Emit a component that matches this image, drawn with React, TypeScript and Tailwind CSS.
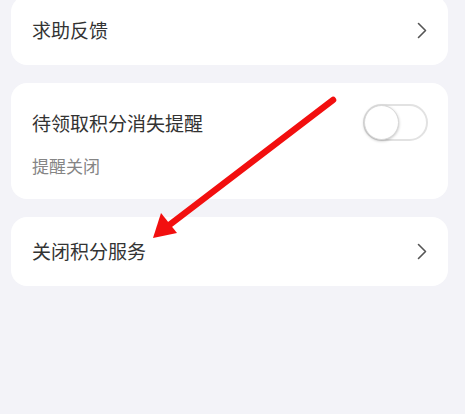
import React from "react";

const font = { fontFamily: '"Noto Sans CJK SC", "Noto Sans", sans-serif' };

function Chevron() {
  return (
    <svg width="10" height="17" viewBox="0 0 10 17" fill="none">
      <path d="M1.5 1.5 L8.5 8.5 L1.5 15.5" stroke="#555" strokeWidth="1.6" strokeLinecap="round" strokeLinejoin="round" />
    </svg>
  );
}

function Toggle() {
  return (
    <div className="w-[65px] h-[37px] rounded-full border-2 border-[#e2e2e2] bg-white flex items-center">
      <div className="w-[35px] h-[35px] -ml-[1px] rounded-full bg-white border border-[#d8d8d8] shadow-[0_1px_3px_rgba(0,0,0,0.25)]" />
    </div>
  );
}

export default function App() {
  return (
    <div className="relative w-[465px] h-[414px] overflow-hidden bg-[#f3f3f8]" style={font}>
      <div className="flex flex-col gap-[18px] pl-[11px] pr-[17px] -mt-[4px]">
        <div className="h-[69px] rounded-[16px] bg-white flex items-center justify-between pl-[21px] pr-[21px]">
          <span className="text-[19px] text-[#333]">求助反馈</span>
          <Chevron />
        </div>

        <div className="h-[116px] rounded-[16px] bg-white flex items-start justify-between pl-[21px] pr-[20px]">
          <div className="flex flex-col">
            <span className="text-[19px] text-[#333] leading-[28px] mt-[26px]">待领取积分消失提醒</span>
            <span className="text-[17px] text-[#858585] leading-[24px] mt-[17px]">提醒关闭</span>
          </div>
          <div className="mt-[21px]">
            <Toggle />
          </div>
        </div>

        <div className="h-[69px] rounded-[16px] bg-white flex items-center justify-between pl-[21px] pr-[21px]">
          <span className="text-[19px] text-[#333]">关闭积分服务</span>
          <Chevron />
        </div>
      </div>

      <svg className="absolute left-0 top-0" width="465" height="414" viewBox="0 0 465 414">
        <line x1="333" y1="100" x2="168" y2="226" stroke="#f20f0f" strokeWidth="6.5" strokeLinecap="round" />
        <polygon points="153,238 161,213 177,233" fill="#f20f0f" />
      </svg>
    </div>
  );
}
